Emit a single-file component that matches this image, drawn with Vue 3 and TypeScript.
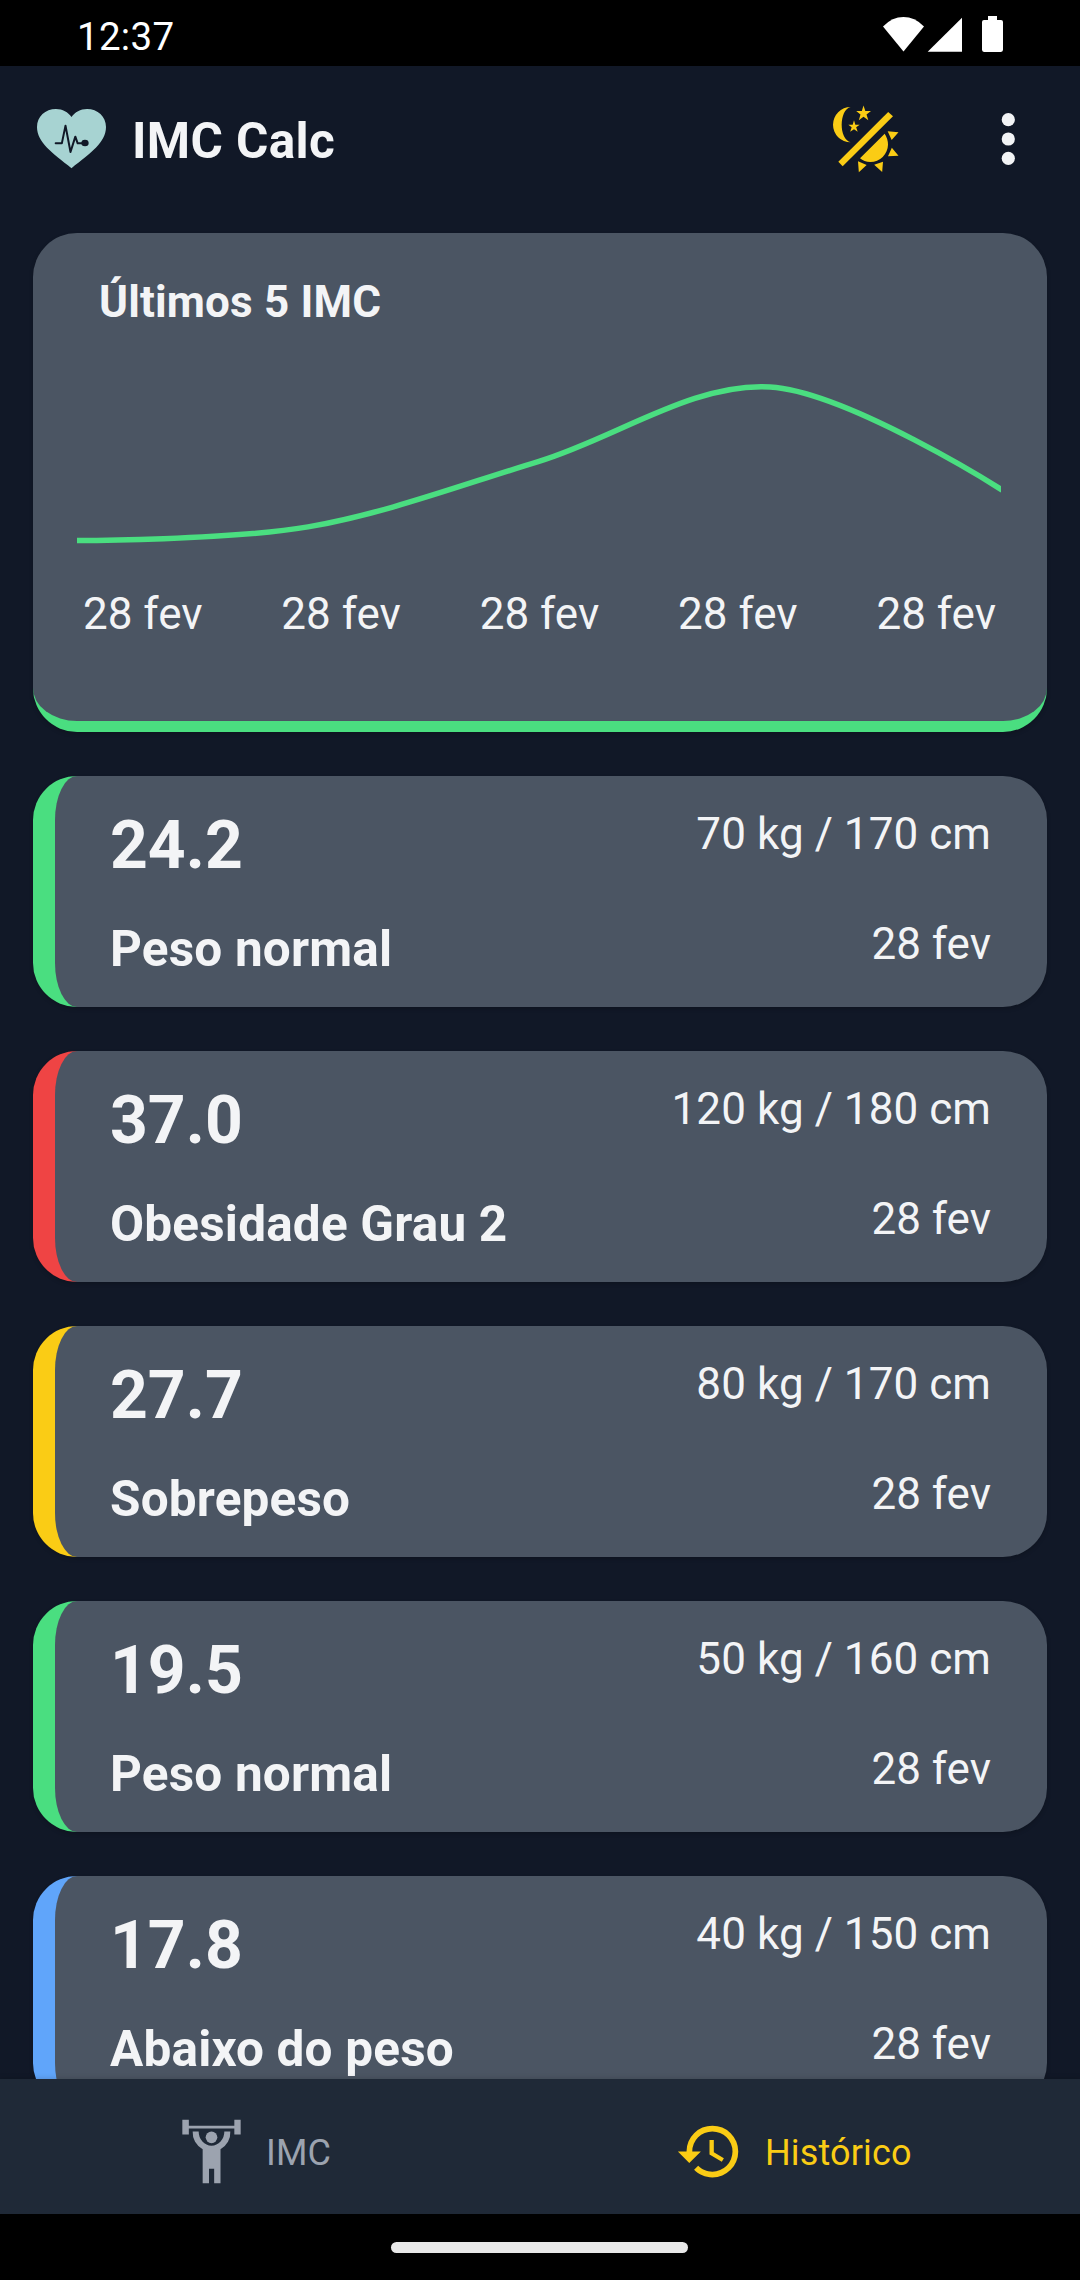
<script setup lang="ts">
interface Entry {
  imc: string
  label: string
  measures: string
  date: string
  tone: 'green' | 'red' | 'yellow' | 'blue'
}

const entries: Entry[] = [
  { imc: '24.2', label: 'Peso normal', measures: '70 kg / 170 cm', date: '28 fev', tone: 'green' },
  { imc: '37.0', label: 'Obesidade Grau 2', measures: '120 kg / 180 cm', date: '28 fev', tone: 'red' },
  { imc: '27.7', label: 'Sobrepeso', measures: '80 kg / 170 cm', date: '28 fev', tone: 'yellow' },
  { imc: '19.5', label: 'Peso normal', measures: '50 kg / 160 cm', date: '28 fev', tone: 'green' },
  { imc: '17.8', label: 'Abaixo do peso', measures: '40 kg / 150 cm', date: '28 fev', tone: 'blue' },
]

// Oldest entry first, plotted over the full chart width.
const history = [...entries].reverse()
const chartWidth = 924
const chartHeight = 176

type Point = [number, number]
const values = history.map((e) => Number(e.imc))
const min = Math.min(...values)
const max = Math.max(...values)
const points: Point[] = values.map((v, i) => [
  (i * chartWidth) / (values.length - 1),
  11 + (1 - (v - min) / (max - min)) * 153.5,
])

// Cardinal spline: inner points follow their neighbours, the ends stay free.
function control(i: number, dir: 1 | -1): Point {
  const [x, y] = points[i]
  if (i === 0 || i === points.length - 1) return [x, y]
  const prev = points[i - 1]
  const next = points[i + 1]
  return [x + (dir * (next[0] - prev[0])) / 6, y + (dir * (next[1] - prev[1])) / 6]
}

const linePath =
  points
    .map((p, i) => (i === 0 ? `M${p}` : `C${control(i - 1, 1)} ${control(i, -1)} ${p}`))
    .join(' ')
</script>

<template>
  <div class="screen">
    <div class="status">
      <span class="clock">12:37</span>
      <svg class="status-icons" viewBox="489 48 360 107.5">
        <path d="M550.5 154.5 489 79Q517 51 550.5 51T612 79Z" />
        <path d="M726 53V155H623Z" />
        <path d="M804 48H831V60H843Q849 60 849 66V149Q849 155.500 843 155.500H792Q786 155.500 786 149V66Q786 60 792 60H804Z" />
      </svg>
    </div>

    <header class="header">
      <svg class="logo" viewBox="108 323 213 183">
        <path class="heart" d="M214.500 350C204 335 188 326 168 326C136 326 111 349 111 380C111 426 157 458 214.500 503.500C272 458 318 426 318 380C318 349 293 326 261 326C241 326 225 335 214.500 350Z" />
        <path class="pulse" d="M167 429H185.500L196.500 376L211.500 455L226 409L233 429H247" />
        <ellipse class="pulse-dot" cx="255" cy="428" rx="11" ry="10" />
      </svg>
      <h1 class="title">IMC Calc</h1>
      <svg class="theme" viewBox="336 312 204 207">
        <path d="M392 321A53 53 0 0 0 392 427C356 418 356 330 392 321Z" />
        <path d="M430.500 316.500 436 333H453L439.500 343.500 445 360.500 430.500 350 416.500 360.500 421.500 343.500 408.500 333H425.500Z" />
        <path d="M402 361 406 374H419L408.500 382 413 395.500 402 387.500 390.500 395.500 395 382 385 374H398Z" />
        <path d="M504.500 336 519 349 368 498.500 355 485.500Z" />
        <path d="M494 401Q504 416 504 434A53 53 0 0 1 451 486Q432 486 420 475Z" />
        <path d="M503 394 535.500 397 515 420ZM515.500 443.500 535.500 467.500 504 468.500ZM462.500 494.500 489 485 486.500 516ZM414 484 440 495 416.500 516.500Z" />
      </svg>
      <svg class="menu" viewBox="0 0 14 52">
        <circle cx="7.300" cy="6.700" r="6.600" />
        <circle cx="7.300" cy="26" r="6.600" />
        <circle cx="7.300" cy="45.300" r="6.600" />
      </svg>
    </header>

    <main class="content">
      <section class="chart-card">
        <h2 class="chart-title">Últimos 5 IMC</h2>
        <svg class="chart" :viewBox="`0 0 ${chartWidth} ${chartHeight}`">
          <path :d="linePath" />
        </svg>
        <div class="axis">
          <span v-for="(e, i) in history" :key="i">{{ e.date }}</span>
        </div>
      </section>

      <article v-for="(e, i) in entries" :key="i" class="entry" :class="e.tone">
        <div class="left">
          <span class="imc">{{ e.imc }}</span>
          <span class="label">{{ e.label }}</span>
        </div>
        <div class="right">
          <span class="measures">{{ e.measures }}</span>
          <span class="date">{{ e.date }}</span>
        </div>
      </article>
    </main>

    <nav class="tabs">
      <div class="tab first">
        <svg class="lifter" viewBox="546 775.500 177 195">
          <path d="M547 777.500H566.500V795.500H703V777.500H722V822H703V804H566.500V822H547Z" />
          <circle cx="634.500" cy="830.500" r="17.500" />
          <path d="M578 813H596A38.500 42.500 0 0 0 673 813H691A56.500 56.500 0 0 1 661.500 866V968.500H642.500V924.500H627V968.500H608V866A56.500 56.500 0 0 1 578 813Z" />
        </svg>
        <span>IMC</span>
      </div>
      <div class="tab active">
        <svg class="clock-icon" viewBox="0 0 24 24">
          <path d="M13.500 8H12V13L16.280 15.540 17 14.330 13.500 12.250V8M13 3A9 9 0 0 0 4 12H1L4.960 16.030 9 12H6A7 7 0 0 1 13 5 7 7 0 0 1 20 12 7 7 0 0 1 13 19C11.070 19 9.320 18.210 8.060 16.940L6.640 18.360C8.270 20 10.500 21 13 21A9 9 0 0 0 22 12 9 9 0 0 0 13 3" />
        </svg>
        <span>Histórico</span>
      </div>
    </nav>

    <div class="system"><div class="handle"></div></div>
  </div>
</template>

<style>
body {
  margin: 0;
  background: #000;
}
</style>

<style scoped>
.screen {
  width: 1080px;
  height: 2280px;
  display: flex;
  flex-direction: column;
  overflow: hidden;
  background: #111827;
  color: #f3f4f6;
  font-family: Roboto, sans-serif;
}
svg {
  display: block;
  flex: none;
}
.status {
  flex: none;
  box-sizing: border-box;
  height: 66px;
  padding: 16px 77px 0 77px;
  display: flex;
  justify-content: space-between;
  align-items: flex-start;
  background: #000;
  color: #fff;
}
.clock {
  font-size: 38.5px;
  line-height: 42px;
  letter-spacing: 0.3px;
}
.status-icons {
  width: 120px;
  height: 36px;
  fill: #fff;
}
.header {
  flex: none;
  box-sizing: border-box;
  height: 147px;
  padding: 0 65px 0 36px;
  display: flex;
  align-items: center;
}
.logo {
  width: 71px;
  height: 61px;
  margin-top: -3px;
}
.heart {
  fill: #a7d3d2;
}
.pulse {
  fill: none;
  stroke: #111827;
  stroke-width: 6;
  stroke-linecap: round;
  stroke-linejoin: round;
}
.pulse-dot {
  fill: #111827;
}
.title {
  margin: 3px 0 0 25px;
  flex: 1;
  font-size: 49.5px;
  line-height: 60px;
  font-weight: 700;
  letter-spacing: 0.35px;
}
.theme {
  width: 68px;
  height: 69px;
  margin-top: -2px;
  fill: #facc15;
}
.menu {
  width: 14px;
  height: 52px;
  margin-left: 101px;
  margin-top: -1px;
  fill: #f3f4f6;
}
.content {
  flex: 1;
  min-height: 0;
  overflow: hidden;
  padding: 20px 33px 0;
  display: flex;
  flex-direction: column;
  gap: 44px;
}
.chart-card {
  flex: none;
  box-sizing: border-box;
  height: 499px;
  padding: 39px 44px 0;
  border-bottom: 11px solid #4ade80;
  border-radius: 44px;
  background: #4b5563;
  box-shadow: 0 2px 4px rgba(0, 0, 0, 0.18);
}
.chart-title {
  margin: 0 0 0 22px;
  font-size: 44px;
  line-height: 60px;
  font-weight: 700;
  letter-spacing: 0.16px;
}
.chart {
  width: 924px;
  height: 176px;
  margin-top: 44px;
  overflow: hidden;
}
.chart path {
  fill: none;
  stroke: #4ade80;
  stroke-width: 5.5;
  stroke-linecap: square;
}
.axis {
  display: flex;
  justify-content: space-between;
  padding: 0 7px 0 6px;
  margin-top: 32px;
  font-size: 44px;
  line-height: 60px;
}
.entry {
  flex: none;
  box-sizing: border-box;
  height: 231px;
  padding: 22px 56px 0 55px;
  border-left: 22px solid;
  border-radius: 44px;
  background: #4b5563;
  box-shadow: 0 2px 4px rgba(0, 0, 0, 0.18);
  display: flex;
  justify-content: space-between;
}
.green {
  border-color: #4ade80;
}
.red {
  border-color: #ef4444;
}
.yellow {
  border-color: #facc15;
}
.blue {
  border-color: #60a5fa;
}
.left,
.right {
  display: flex;
  flex-direction: column;
  color: #f3f4f6;
}
.left {
  gap: 23px;
  font-weight: 700;
}
.right {
  gap: 44px;
  align-items: flex-end;
  font-size: 44px;
}
.imc {
  font-size: 66px;
  line-height: 95px;
}
.label {
  font-size: 49.5px;
  line-height: 66px;
  letter-spacing: 0.18px;
}
.measures {
  line-height: 72px;
  letter-spacing: 0.07px;
}
.date {
  line-height: 60px;
}
.tabs {
  flex: none;
  height: 135px;
  display: flex;
  background: #1f2937;
  box-shadow: 0 -1px 5px rgba(0, 0, 0, 0.15);
}
.tab {
  flex: none;
  width: 50%;
  box-sizing: border-box;
  display: flex;
  align-items: center;
  padding: 9px 0 0 135px;
  color: #9ca3af;
  fill: #9ca3af;
  font-size: 36px;
  line-height: 50px;
}
.tab span {
  margin-top: 3px;
  letter-spacing: 0.15px;
}
.tab.first {
  padding-left: 182px;
}
.tab.active {
  color: #facc15;
  fill: #facc15;
}
.lifter {
  width: 59px;
  height: 65px;
  margin-right: 25px;
}
.clock-icon {
  width: 69px;
  height: 69px;
  margin-right: 21px;
}
.system {
  flex: none;
  box-sizing: border-box;
  height: 66px;
  padding-right: 1px;
  display: flex;
  align-items: center;
  justify-content: center;
  background: #000;
}
.handle {
  width: 297px;
  height: 11px;
  border-radius: 6px;
  background: #e8e8e8;
}
</style>
